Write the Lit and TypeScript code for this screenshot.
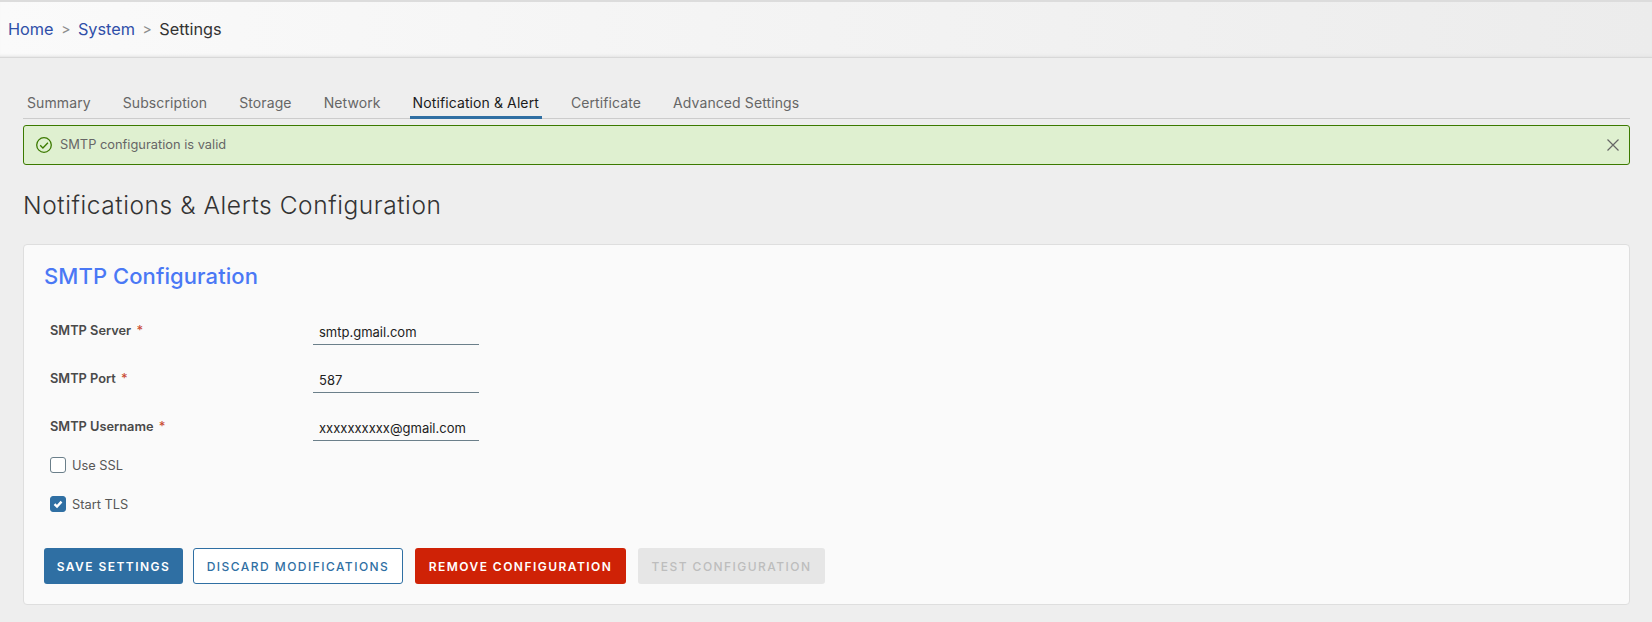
import { LitElement, html, css } from "lit";
import { customElement } from "lit/decorators.js";

const tabs = ["Summary", "Subscription", "Storage", "Network", "Notification & Alert", "Certificate", "Advanced Settings"];
const fields = [
  { label: "SMTP Server", value: "smtp.gmail.com" },
  { label: "SMTP Port", value: "587" },
  { label: "SMTP Username", value: "xxxxxxxxxx@gmail.com" },
];

@customElement("app-root")
export class AppRoot extends LitElement {
  static styles = css`
    :host { display: block; width: 1652px; height: 622px; overflow: hidden; background: #eeeeee; font-family: Inter, "Liberation Sans", sans-serif; color: #565656; }
    .top { height: 2px; background: #dcdcdc; }
    .crumbs { height: 56px; box-sizing: border-box; border-bottom: 1px solid #d8d8d8; background: linear-gradient(90deg, #fafafa 0%, #f3f3f3 50%, #ececec 100%); box-shadow: inset 0 -3px 3px -2px #e2e2e2; display: flex; align-items: center; padding: 0 0 2px 8px; font-size: 16.3px; }
    .crumbs a { color: #2f4fa8; }
    .crumbs .sep { color: #8c8c8c; margin: 0 7.5px; font-size: 14px; }
    .crumbs .cur { color: #333; }
    main { padding: 0 22px 0 23px; }
    .tabs { margin-top: 30px; height: 31px; box-sizing: border-box; border-bottom: 1px solid #cccccc; display: flex; padding-left: 1px; }
    .tab { height: 31px; box-sizing: border-box; padding: 5px 3px 0; margin-right: 26px; font-size: 14px; line-height: 20px; color: #666; letter-spacing: 0.1px; }
    .tab.on { color: #1b1b1b; border-bottom: 3px solid #2f6fa3; }
    .alert { margin-top: 6px; height: 40px; box-sizing: border-box; border: 1px solid #3c7a00; border-radius: 3px; background: #dff0d0; display: flex; align-items: center; padding: 0 9px 2px 11px; font-size: 12.85px; color: #666; gap: 7px; }
    .alert span { flex: 1; }
    .alert svg { display: block; margin-top: 1px; }
    h1 { margin: 24px 0 0; font-size: 24.5px; line-height: 32px; font-weight: 300; color: #333; letter-spacing: 0.57px; }
    .card { margin: 23px 0 0; height: 361px; box-sizing: border-box; background: #fafafa; border: 1px solid #dedede; border-radius: 4px; padding: 16px 20px 0; }
    h2 { margin: 0; font-size: 22px; line-height: 30px; font-weight: 500; color: #4a78f5; letter-spacing: 0.08px; }
    .form { margin-top: 23px; padding-left: 6px; }
    .row { display: grid; grid-template-columns: 263px 166px; height: 48px; }
    .row label { font-size: 12.8px; font-weight: 600; color: #4a4a4a; line-height: 18px; padding-top: 8px; }
    .row label b { color: #c94a30; font-weight: 500; margin-left: 2px; }
    .input { height: 31px; box-sizing: border-box; border-bottom: 1px solid #6b7f8a; padding: 9px 0 0 6px; font-size: 13px; line-height: 18px; color: #222; white-space: nowrap; }
    .checks { margin-top: -1px; }
    .check { display: flex; align-items: center; gap: 6px; height: 16px; margin-bottom: 23px; font-size: 12.8px; color: #565656; }
    .box { width: 16px; height: 16px; box-sizing: border-box; border: 1px solid #6b7f8a; border-radius: 3px; display: flex; align-items: center; justify-content: center; background: #fff; }
    .box.on { background: #2f6fa3; border-color: #2f6fa3; }
    .actions { display: flex; margin-top: 36px; }
    .btn { height: 36px; box-sizing: border-box; border-radius: 3px; border: 1px solid transparent; display: flex; align-items: center; justify-content: center; font-size: 12px; font-weight: 600; letter-spacing: 1.46px; white-space: nowrap; }
    .save { width: 139px; background: #2f6fa3; color: #fff; margin-right: 10px; }
    .discard { width: 210px; background: #fff; border-color: #2f6fa3; color: #2f6fa3; margin-right: 12px; font-weight: 500; }
    .remove { width: 211px; background: #cf2206; color: #fff; margin-right: 12px; }
    .test { width: 187px; background: #e6e6e6; color: #bdbdbd; font-weight: 500; }
  `;

  render() {
    return html`
      <div class="top"></div>
      <nav class="crumbs"><a>Home</a><span class="sep">&gt;</span><a>System</a><span class="sep">&gt;</span><span class="cur">Settings</span></nav>
      <main>
        <div class="tabs">
          ${tabs.map((t) => html`<div class="tab ${t.startsWith("Notification") ? "on" : ""}">${t}</div>`)}
        </div>
        <div class="alert">
          <svg width="18" height="18" viewBox="0 0 18 18" fill="none" stroke="#3c7a00" stroke-width="1.3"><circle cx="9" cy="9" r="7.3"/><path d="M5.2 9.3l2.7 2.7 5-5.3"/></svg>
          <span>SMTP configuration is valid</span>
          <svg width="14" height="14" viewBox="0 0 14 14" fill="none" stroke="#666" stroke-width="1.2"><path d="M1.5 1.5l11 11M12.5 1.5l-11 11"/></svg>
        </div>
        <h1>Notifications &amp; Alerts Configuration</h1>
        <section class="card">
          <h2>SMTP Configuration</h2>
          <div class="form">
            ${fields.map((f) => html`<div class="row"><label>${f.label} <b>*</b></label><div class="input">${f.value}</div></div>`)}
            <div class="checks">
              <div class="check"><div class="box"></div>Use SSL</div>
              <div class="check"><div class="box on"><svg width="12" height="12" viewBox="0 0 12 12" fill="none" stroke="#fff" stroke-width="2.4"><path d="M2.5 6.2l2.5 2.4 4.5-5"/></svg></div>Start TLS</div>
            </div>
          </div>
          <div class="actions">
            <div class="btn save">SAVE SETTINGS</div>
            <div class="btn discard">DISCARD MODIFICATIONS</div>
            <div class="btn remove">REMOVE CONFIGURATION</div>
            <div class="btn test">TEST CONFIGURATION</div>
          </div>
        </section>
      </main>
    `;
  }
}
